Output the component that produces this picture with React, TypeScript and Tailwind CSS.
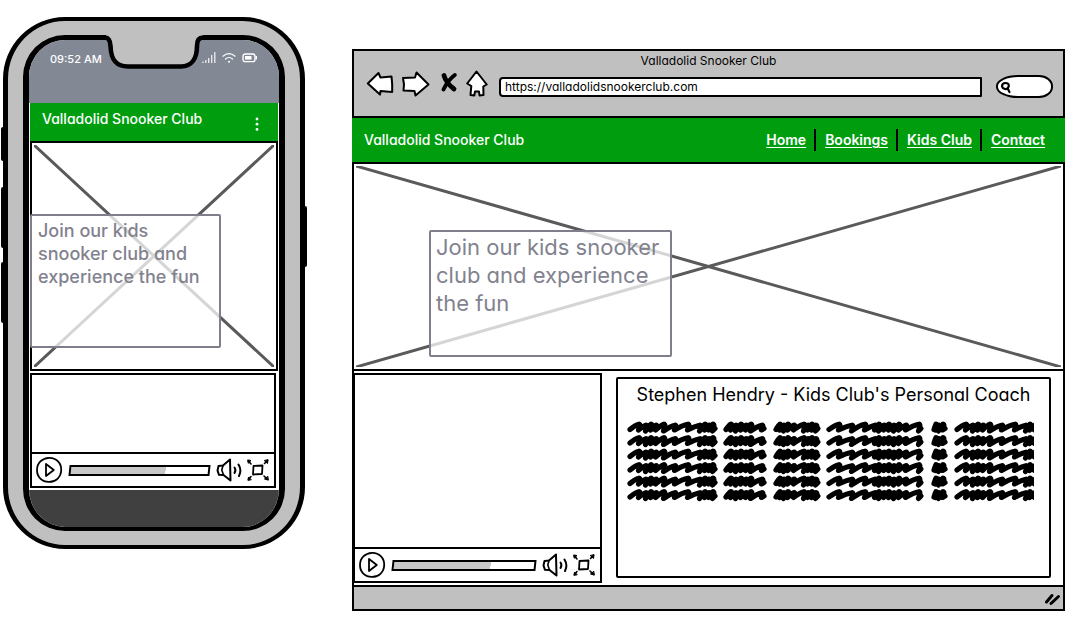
import type { ReactNode } from "react";

const WORDS: { start: number; peaks: number[] }[] = [
  { start: 3, peaks: [13, 20, 25, 30, 38, 49, 62, 74, 79, 83, 87] },
  { start: 99, peaks: [105, 110, 115, 120, 125, 136] },
  { start: 149, peaks: [154, 158, 162, 168, 178, 182, 186, 190] },
  { start: 202, peaks: [213, 226, 239, 249, 253, 258, 263, 268, 273, 280, 293] },
  { start: 307, peaks: [310, 313, 317] },
  { start: 330, peaks: [340, 347, 352, 357, 364, 376, 389, 400, 404, 409] },
];

const LINES = [0, 1, 2, 3, 4, 5];

function scribble(start: number, peaks: number[]) {
  let d = `M${start} 8.5`;
  let x = start;
  peaks.forEach((p, i) => {
    const top = i % 2 ? 4.2 : 3.2;
    const low = i % 3 === 1 ? 10 : 9;
    d += `Q${(x + p) / 2} ${top + 1} ${p - 1} ${top}Q${p + 1} ${top} ${p - 1.5} ${low}`;
    x = p;
  });
  return d + `L${x + 1} 7.5`;
}

function Scribbles() {
  return (
    <svg viewBox="0 0 407 82" className="block w-full" aria-hidden="true">
      {LINES.map((row) => (
        <g key={row} transform={`translate(0 ${row * 13.5})`}>
          {WORDS.map((w) => (
            <path
              key={w.start}
              d={scribble(w.start, w.peaks)}
              fill="none"
              stroke="#000"
              strokeWidth="5.2"
              strokeLinecap="round"
              strokeLinejoin="round"
            />
          ))}
        </g>
      ))}
    </svg>
  );
}

function CrossedImage({ className, children }: { className: string; children: ReactNode }) {
  return (
    <section className={`relative border-2 border-black bg-white ${className}`}>
      <svg
        viewBox="0 0 100 100"
        preserveAspectRatio="none"
        className="absolute inset-0 h-full w-full p-0.5"
        aria-hidden="true"
      >
        <path
          d="M0 0 100 100M100 0 0 100"
          stroke="#5a5a5a"
          strokeWidth="3"
          vectorEffect="non-scaling-stroke"
        />
      </svg>
      {children}
    </section>
  );
}

function VideoPlayer({ className }: { className: string }) {
  return (
    <section className={`flex flex-col border-2 border-black bg-white ${className}`}>
      <div className="flex-1" />
      <div className="flex h-[34px] shrink-0 items-center border-t-2 border-black pl-[3px] pr-1">
        <button type="button" aria-label="Play" className="shrink-0">
          <svg width="28" height="28" viewBox="0 0 28 28" fill="none" stroke="#000" strokeWidth="1.8" strokeLinejoin="round">
            <path d="M14 1.8C21 1.5 26.4 7 26.2 14 26 21.500 20.500 26 14 25.900 7 26 1.900 21 2 14 2 7 7 2.200 14 1.800Z" />
            <path d="M11 8 18.800 14 11 20Z" />
          </svg>
        </button>
        <input
          type="range"
          aria-label="Position"
          defaultValue={68}
          className="mx-1.5 h-[11px] min-w-0 flex-1 -skew-x-6 appearance-none border-2 border-black bg-white bg-linear-to-r from-[#c8c8c8] from-69% to-white to-69% [&::-webkit-slider-thumb]:opacity-0"
        />
        <button type="button" aria-label="Volume" className="shrink-0">
          <svg width="26" height="26" viewBox="0 0 26 26" fill="none" stroke="#000" strokeWidth="2" strokeLinejoin="round" strokeLinecap="round">
            <path d="M2.500 9 7 8.500 14 2.500 14.500 23.500 7.500 18 3 17.800 1.500 13.500Z" />
            <path d="M7 8.500 5.800 13 7.500 18" strokeWidth="1.600" />
            <path d="M18.500 10.500Q20.300 13 18.500 16" />
            <path d="M22.500 7.500Q26 13 23 19" />
          </svg>
        </button>
        <button type="button" aria-label="Full screen" className="ml-1 shrink-0">
          <svg width="24" height="24" viewBox="0 0 24 24" fill="none" stroke="#000" strokeWidth="1.800" strokeLinejoin="round" strokeLinecap="round">
            <path d="M7.500 8 16.500 7.500 16 16 7 16.500Z" />
            <path d="M5 6 2.500 3M18.500 5.500 21.500 2.500M5 18.500 2.500 21.500M18 18 21.500 21.500" strokeWidth="1.600" />
            <path d="M2 2 5 2.500 2.500 5ZM22 2 21.500 5.500 18.500 2.800ZM2 22 2.500 19 5 21.500ZM22 22 18.500 21 21.500 18.500Z" fill="#000" strokeWidth="1" />
          </svg>
        </button>
      </div>
    </section>
  );
}

function Phone() {
  return (
    <article className="relative w-[302px] shrink-0 rounded-[62px] border-x-[5px] border-y-4 border-black bg-[#c0c0c0] px-[15px] py-3.5">
      <span className="absolute -left-[7px] top-[106px] h-[34px] w-1 rounded-l-xs bg-black" />
      <span className="absolute -left-[7px] top-[166px] h-[61px] w-1 rounded-l-xs bg-black" />
      <span className="absolute -left-[7px] top-[241px] h-[61px] w-1 rounded-l-xs bg-black" />
      <span className="absolute -right-[7px] top-[185px] h-[61px] w-1 rounded-r-xs bg-black" />

      <svg
        width="104"
        height="40"
        viewBox="100 30 104 40"
        className="absolute left-23 top-[9px] z-10"
        aria-hidden="true"
      >
        <path d="M106 30V37.500Q110.500 38 110.500 46C111 61 117 66.500 128 66.500H181C192 66.500 197 58 197 46Q197 37.500 203 37.500V30Z" fill="#c0c0c0" />
        <path
          d="M102 37.500H105Q110 37.500 110.500 46C111 61 117 66.500 128 66.500H181C192 66.500 197 58 197 46Q197 37.500 203 37.500H204"
          fill="none"
          stroke="#000"
          strokeWidth="4.600"
        />
      </svg>

      <div className="overflow-hidden rounded-[42px] border-x-[6px] border-t-[5px] border-b-4 border-black bg-white">
        <div className="flex h-[63px] items-start justify-between bg-[#828894] pl-[21px] pr-[22px] pt-[11px] text-white">
          <time className="text-[11px] font-medium leading-4">09:52 AM</time>
          <div className="flex items-center gap-1.5">
            <svg width="14" height="13" viewBox="0 0 14 13" stroke="#fff" strokeWidth="1.300" opacity="0.850" aria-hidden="true">
              <path d="M1 12V10.500M3.800 12V9M6.700 12V7M9.700 12V4M12.800 12V1" />
            </svg>
            <svg width="14" height="12" viewBox="0 0 14 12" fill="none" stroke="#fff" strokeWidth="1.200" strokeLinecap="round" aria-hidden="true">
              <path d="M1 4.200Q7-.8 13 4.200M3.500 7Q7 4 10.500 7" />
              <circle cx="7" cy="9.800" r="1" fill="#fff" stroke="none" />
            </svg>
            <svg width="15" height="10" viewBox="0 0 15 10" fill="none" stroke="#fff" strokeWidth="1.400" aria-hidden="true">
              <rect x="1" y="1" width="12" height="7.600" rx="2.200" />
              <rect x="3" y="3" width="6.500" height="3.600" fill="#fff" stroke="none" />
              <path d="M14.300 3V6.500" />
            </svg>
          </div>
        </div>

        <header className="mx-px flex h-[38px] items-start justify-between bg-[#009e0f] pl-3 pr-[19px] pt-1.5 text-white">
          <h1 className="text-sm font-medium leading-5">Valladolid Snooker Club</h1>
          <button type="button" aria-label="Menu" className="pt-2">
            <svg width="4" height="15" viewBox="0 0 4 15" fill="#fff">
              <circle cx="2" cy="2" r="1.400" />
              <circle cx="2" cy="7.200" r="1.400" />
              <circle cx="2" cy="12.400" r="1.400" />
            </svg>
          </button>
        </header>

        <CrossedImage className="mx-px h-[230px]">
          <p className="absolute -left-0.5 top-[71px] h-[134px] w-[191px] rounded-xs border-2 border-[#7f7f8b] bg-white/75 px-1.5 py-[3px] text-lg font-medium leading-[23px] text-[#82828f]">
            Join our kids snooker club and experience the fun
          </p>
        </CrossedImage>

        <VideoPlayer className="my-0.5 ml-px mr-[3px] h-[115px]" />
        <div className="h-[37px] bg-[#404040]" />
      </div>
    </article>
  );
}

const NAV = ["Home", "Bookings", "Kids Club", "Contact"];

function Browser() {
  return (
    <article className="mt-8 min-w-0 flex-1 border-2 border-black bg-white">
      <div className="border-b-2 border-black bg-[#c0c0c0] pb-5">
        <p className="text-center text-xs leading-5">Valladolid Snooker Club</p>
        <div className="flex h-[25px] items-center pl-3 pr-2.5">
          <div className="flex shrink-0 items-center">
            <button type="button" aria-label="Back">
              <svg width="30" height="28" viewBox="0 0 30 28" fill="#fff" stroke="#000" strokeWidth="2" strokeLinejoin="round">
                <path d="M1.800 13.500 12.500 3 14.500 7.500 25.500 6.500Q26.500 14 26.200 22L14.500 21 14 24.500Z" />
              </svg>
            </button>
            <button type="button" aria-label="Forward" className="ml-1">
              <svg width="30" height="28" viewBox="0 0 30 28" fill="#fff" stroke="#000" strokeWidth="2" strokeLinejoin="round">
                <path d="M3 8 15 7.500 16.500 2.500 28.500 14.500 15.500 25.500 14.500 21 3.500 20.500 4 14.500Z" />
              </svg>
            </button>
            <button type="button" aria-label="Stop" className="ml-2.5">
              <svg width="18" height="28" viewBox="0 0 18 28" stroke="#000" strokeLinecap="round">
                <path d="M4 5.500Q6 13 14 19" fill="none" strokeWidth="4.800" />
                <path d="M14.800 5Q8 10 3.500 19.500" fill="none" strokeWidth="4" />
              </svg>
            </button>
            <button type="button" aria-label="Home" className="ml-2">
              <svg width="22" height="30" viewBox="0 0 22 30" fill="#fff" stroke="#000" strokeWidth="2" strokeLinejoin="round">
                <path d="M10.500 2.500 1.200 14.500 5.300 17 4.500 26 8.300 26.500 9 22.500 13 22.500 13.500 26.500 17.500 26 17.300 17.500 20.700 15.500Z" />
              </svg>
            </button>
          </div>
          <input
            type="text"
            aria-label="Address"
            defaultValue="https://valladolidsnookerclub.com"
            className="ml-[11px] mt-1.5 h-5 min-w-0 flex-1 rounded-[4px_1px_1px_4px] border-2 border-black bg-white pl-1 text-xs leading-4 outline-none"
          />
          <div className="relative ml-3.5 mt-1.5 shrink-0">
            <input
              type="search"
              aria-label="Search"
              className="block h-[23px] w-[57px] appearance-none rounded-[22px_14px_14px_22px/11px] border-2 border-black bg-white pl-5 pr-2 text-xs outline-none"
            />
            <svg
              width="12"
              height="13"
              viewBox="0 0 12 13"
              fill="none"
              stroke="#000"
              strokeWidth="2.200"
              strokeLinecap="round"
              className="absolute left-1 top-1.5"
              aria-hidden="true"
            >
              <path d="M2 5.500Q2 2 5.500 2 9 2 8.800 5 8 8.300 5 8 2.500 7.500 2 5.500ZM7.800 7.800 9.500 11" />
            </svg>
          </div>
        </div>
      </div>

      <header className="-mx-0.5 flex h-11 items-center justify-between bg-[#009e0f] pl-3 pr-5 text-sm text-white">
        <h1 className="font-medium leading-5">Valladolid Snooker Club</h1>
        <nav aria-label="Main" className="font-semibold">
          <ul className="flex items-center">
            {NAV.map((item) => (
              <li key={item} className="group flex items-center">
                <a href="#" className="leading-5 underline underline-offset-2">
                  {item}
                </a>
                <span className="ml-2 mr-[9px] h-[22px] w-0.5 bg-black group-last:hidden" />
              </li>
            ))}
          </ul>
        </nav>
      </header>

      <CrossedImage className="-mx-0.5 h-[209px]">
        <p className="absolute left-[75px] top-[66px] h-[127px] w-[243px] rounded-xs border-2 border-[#7f7f8b] bg-white/75 px-[5px] py-px text-[22px] leading-7 text-[#82828f]">
          Join our kids snooker club and experience the fun
        </p>
      </CrossedImage>

      <div className="flex items-start gap-3.5 pb-px pr-3 pt-0.5">
        <VideoPlayer className="-ml-px h-[210px] w-[249px] shrink-0" />
        <section className="mb-1.5 mt-1 h-[201px] min-w-0 flex-1 rounded-[2px] border-2 border-black pb-4">
          <h2 className="whitespace-nowrap text-center text-lg leading-8">
            Stephen Hendry - Kids Club's Personal Coach
          </h2>
          <div className="pl-[9px] pr-[15px] pt-2.5">
            <Scribbles />
          </div>
        </section>
      </div>

      <footer className="flex h-6 items-center justify-end border-t-2 border-black bg-[#c0c0c0] pr-0.5">
        <svg width="18" height="16" viewBox="0 0 18 16" stroke="#000" strokeWidth="3" strokeLinecap="round" aria-hidden="true">
          <path d="M3.500 12 9 5.500M8 13.500 15.500 6.500" />
        </svg>
      </footer>
    </article>
  );
}

export default function App() {
  return (
    <main className="flex min-h-screen items-start gap-[47px] overflow-x-hidden bg-white pb-4 pl-[3px] pt-[17px] font-[Inter,'Noto_Sans',sans-serif] text-black [font-feature-settings:'cv11']">
      <Phone />
      <Browser />
    </main>
  );
}
